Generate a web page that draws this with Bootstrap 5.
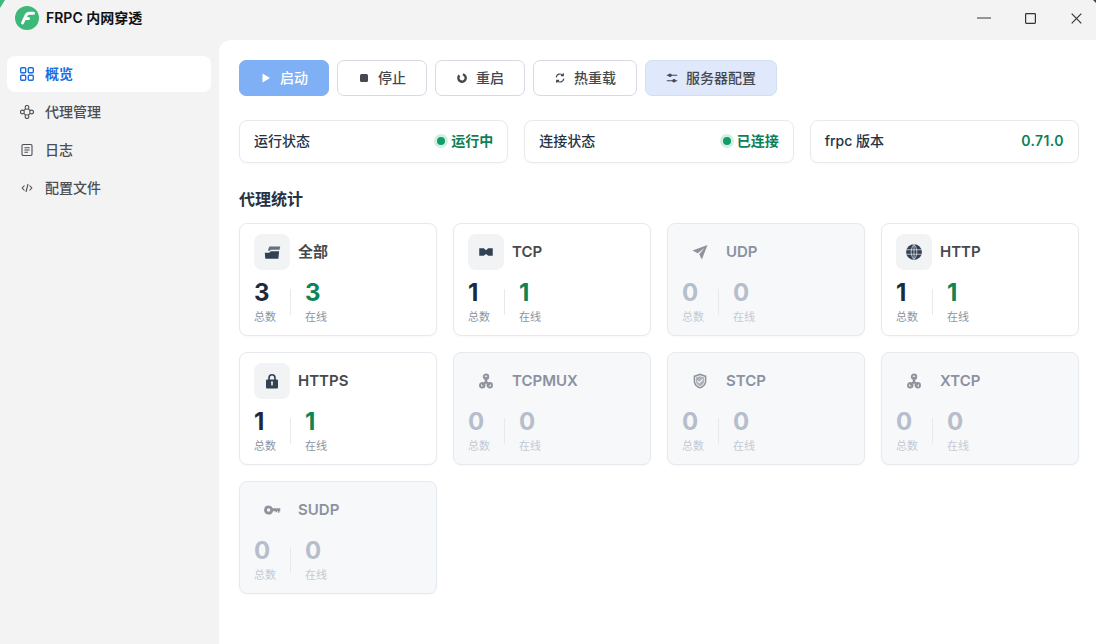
<!DOCTYPE html>
<html lang="zh-CN">
<head>
  <meta charset="UTF-8">
  <title>FRPC 内网穿透</title>
  <link href="https://cdn.jsdelivr.net/npm/bootstrap@5.3.0/dist/css/bootstrap.min.css" rel="stylesheet">
  <style>
    html, body { height: 100%; overflow: hidden; }
    body { background: #f3f3f3; font-family: Inter, "Noto Sans CJK SC", sans-serif; color: #1e293b; font-size: 14px; }
    .corner-mark { position: absolute; top: 0; }
    .app-titlebar { height: 40px; padding: 0 0 4px 15px; }
    .app-logo { width: 24px; height: 24px; }
    .app-title { font-size: 14px; font-weight: 600; color: #111; margin: 0 0 2px 7px; }
    .win-group { margin-right: -3px; }
    .win-btn { width: 46px; height: 36px; }
    .app-body { height: 604px; }
    .app-side { width: 219px; padding: 16px 8px 0 7px; gap: 2px; }
    .side-item { height: 36px; padding-left: 13px; gap: 11px; border-radius: 8px; color: #4b4f55; font-weight: 500; text-decoration: none; }
    .side-item.is-active { background: #fff; color: #1a6fe0; font-weight: 600; }
    .side-item svg { width: 14px; height: 14px; }
    .side-item span, .tool-btn span, .status-box > span { margin-bottom: 2px; }
    .app-main { background: #fff; border-top-left-radius: 12px; padding: 20px 17px 0 20px; }
    .tool-btn { height: 36px; padding: 0 15px; gap: 8px; border: 1px solid #d6dae2; border-radius: 7px; background: #fff; color: #45484e; font-size: 14px; font-weight: 500; }
    .tool-btn svg { width: 12px; height: 12px; }
    .tool-start { width: 90px; background: #7fb0f5; border-color: #7fb0f5; color: #fff; }
    .tool-mid { width: 90px; }
    .tool-reload { width: 104px; }
    .tool-config { width: 132px; background: #dfe9fb; border-color: #d3deee; }
    .status-row { margin-top: 24px; gap: 16px; }
    .status-box { flex: 1 1 0; height: 43px; padding: 0 14px; border: 1px solid #e6e9ee; border-radius: 8px; font-weight: 500; color: #263244; box-shadow: 0 1px 2px rgba(15, 23, 42, .03); }
    .status-ok { color: #0b7f5a; font-weight: 600; gap: 4px; }
    .status-version { letter-spacing: .4px; }
    .status-dot { width: 8px; height: 8px; border-radius: 50%; background: #0f9d68; box-shadow: 0 0 0 3px #d5eee3; margin: 0 2px; }
    .section-title { font-size: 16px; font-weight: 600; color: #263244; margin: 24px 0 12px; line-height: 24px; }
    .proxy-grid { display: grid; grid-template-columns: repeat(4, 198px); gap: 16px; }
    .proxy-card { height: 113px; padding: 10px 14px; border: 1px solid #e6e9ee; border-radius: 8px; background: #fff; box-shadow: 0 1px 2px rgba(15, 23, 42, .03); }
    .proxy-icon { width: 36px; height: 36px; border-radius: 8px; background: #f1f3f5; }
    .proxy-icon svg { width: 18px; height: 18px; fill: #334155; }
    .proxy-name { font-size: 15px; font-weight: 600; color: #46494e; margin-left: 8px; }
    .proxy-stats { margin-top: 8px; }
    .stat-num { font-size: 24px; font-weight: 700; line-height: 30px; color: #1e293b; }
    .stat-online { color: #0b8457; }
    .stat-label { font-size: 11px; line-height: 16px; margin-top: 1px; color: #8d94a0; }
    .stat-sep { width: 1px; height: 26px; background: #e6e9ee; margin: 11px 14px 0 14px; }
    .proxy-card.is-empty { background: #f6f8fa; }
    .is-empty .proxy-icon { background: transparent; }
    .is-empty .proxy-icon svg { fill: #8f949c; }
    .is-empty .proxy-name { color: #8b91a0; }
    .is-empty .stat-num { color: #b6becb; }
    .is-empty .stat-label { color: #c5cad2; }
  </style>
</head>
<body>
  <svg class="corner-mark start-0" width="5" height="8" viewBox="0 0 5 8"><path d="M0 0H5L0 8Z" fill="#3cb878"/></svg>
  <svg class="corner-mark end-0" width="3" height="3" viewBox="0 0 3 3"><path d="M0 0H3V3Z" fill="#444"/></svg>

  <div class="app-titlebar d-flex align-items-center">
    <svg class="app-logo" viewBox="0 0 24 24"><circle cx="12" cy="12" r="12" fill="#3cb878"/><path d="M7.500 17 10.800 9.800Q12 7.300 14.500 7.300H18.500M10 12.500H13.500" fill="none" stroke="#fff" stroke-width="3" stroke-linecap="round"/></svg>
    <span class="app-title">FRPC 内网穿透</span>
    <div class="win-group ms-auto d-flex">
      <div class="win-btn d-flex align-items-center justify-content-center"><svg width="14" height="14" viewBox="0 0 14 14"><path d="M0 7H14" stroke="#555" stroke-width="1.200"/></svg></div>
      <div class="win-btn d-flex align-items-center justify-content-center"><svg width="11" height="11" viewBox="0 0 11 11"><rect x=".6" y=".6" width="9.800" height="9.800" rx=".8" fill="none" stroke="#333" stroke-width="1.200"/></svg></div>
      <div class="win-btn d-flex align-items-center justify-content-center"><svg width="11" height="11" viewBox="0 0 11 11"><path d="M.7 .7 10.300 10.300M10.300 .7 .7 10.300" stroke="#333" stroke-width="1.200"/></svg></div>
    </div>
  </div>

  <div class="app-body d-flex">
    <nav class="app-side d-flex flex-column flex-shrink-0">
      <a class="side-item is-active d-flex align-items-center" href="#"><svg viewBox="0 0 14 14" fill="none" stroke="currentColor" stroke-width="1.400"><rect x=".7" y=".7" width="5" height="5" rx="1"/><rect x="8.300" y=".7" width="5" height="5" rx="1"/><rect x=".7" y="8.300" width="5" height="5" rx="1"/><rect x="8.300" y="8.300" width="5" height="5" rx="1"/></svg><span>概览</span></a>
      <a class="side-item d-flex align-items-center" href="#"><svg viewBox="0 0 14 14" fill="none" stroke="currentColor" stroke-width="1.100"><circle cx="7" cy="2.400" r="1.900"/><circle cx="7" cy="11.600" r="1.900"/><circle cx="2.400" cy="7" r="1.900"/><circle cx="11.600" cy="7" r="1.900"/><path d="M3.800 5.600 5.600 3.800M8.400 3.800 10.200 5.600M10.200 8.400 8.400 10.200M5.600 10.200 3.800 8.400"/></svg><span>代理管理</span></a>
      <a class="side-item d-flex align-items-center" href="#"><svg viewBox="0 0 14 14" fill="none" stroke="currentColor" stroke-width="1.100"><rect x="2" y="1.500" width="10" height="11" rx="1.200"/><path d="M4.400 4.800H9.600M4.400 7H9.600M4.400 9.200H8"/></svg><span>日志</span></a>
      <a class="side-item d-flex align-items-center" href="#"><svg viewBox="0 0 14 14" fill="none" stroke="currentColor" stroke-width="1.100"><path d="M4.500 4.500 2.200 7 4.500 9.500M9.500 4.500 11.800 7 9.500 9.500M8 3 6 11"/></svg><span>配置文件</span></a>
    </nav>

    <main class="app-main flex-grow-1">
      <div class="d-flex gap-2">
        <button type="button" class="tool-btn tool-start d-flex align-items-center justify-content-center"><svg viewBox="0 0 12 12"><path d="M2.500 1.500 10 6 2.500 10.500Z" fill="#fff"/></svg><span>启动</span></button>
        <button type="button" class="tool-btn tool-mid d-flex align-items-center justify-content-center"><svg viewBox="0 0 12 12"><rect x="2" y="2" width="8" height="8" rx="1.500" fill="#45484e"/></svg><span>停止</span></button>
        <button type="button" class="tool-btn tool-mid d-flex align-items-center justify-content-center"><svg viewBox="0 0 12 12"><path d="M7 2.400A3.700 3.700 0 1 1 3.400 3.400" fill="none" stroke="#45484e" stroke-width="2.400"/></svg><span>重启</span></button>
        <button type="button" class="tool-btn tool-reload d-flex align-items-center justify-content-center"><svg viewBox="0 0 12 12" fill="none" stroke="#45484e" stroke-width="1.200"><path d="M2.200 5.400A3.800 3.800 0 0 1 8.900 3.400M9.800 6.600A3.800 3.800 0 0 1 3.100 8.600M9.300 1.200V3.700H6.900M2.700 10.800V8.300H5.100"/></svg><span>热重载</span></button>
        <button type="button" class="tool-btn tool-config d-flex align-items-center justify-content-center"><svg viewBox="0 0 12 12" fill="#45484e" stroke="#45484e" stroke-width="1.100"><path d="M.8 3.200H11.200M.8 8.800H11.200"/><circle cx="4" cy="3.200" r="1.200"/><circle cx="8" cy="8.800" r="1.200"/></svg><span>服务器配置</span></button>
      </div>

      <div class="status-row d-flex">
        <div class="status-box d-flex align-items-center justify-content-between"><span>运行状态</span><span class="status-ok d-flex align-items-center"><i class="status-dot"></i>运行中</span></div>
        <div class="status-box d-flex align-items-center justify-content-between"><span>连接状态</span><span class="status-ok d-flex align-items-center"><i class="status-dot"></i>已连接</span></div>
        <div class="status-box d-flex align-items-center justify-content-between"><span>frpc 版本</span><span class="status-ok status-version">0.71.0</span></div>
      </div>

      <div class="section-title">代理统计</div>

      <div class="proxy-grid">
        <div class="proxy-card">
          <div class="d-flex align-items-center"><div class="proxy-icon d-flex align-items-center justify-content-center"><svg viewBox="0 0 24 24"><path d="M6.500 9.500 8.500 4.500H23L22 9H10.500L8.500 10.500Z" opacity=".75"/><path d="M2.500 13H8L10.500 11H21.500L20.500 21H4Q3 21 2.900 20Z"/></svg></div><span class="proxy-name">全部</span></div>
          <div class="proxy-stats d-flex"><div><div class="stat-num">3</div><div class="stat-label">总数</div></div><div class="stat-sep"></div><div><div class="stat-num stat-online">3</div><div class="stat-label">在线</div></div></div>
        </div>
        <div class="proxy-card">
          <div class="d-flex align-items-center"><div class="proxy-icon d-flex align-items-center justify-content-center"><svg viewBox="0 0 24 24"><path d="M3 7H9L12 9.500 15 7H21V17H15L12 14.500 9 17H3Z"/></svg></div><span class="proxy-name">TCP</span></div>
          <div class="proxy-stats d-flex"><div><div class="stat-num">1</div><div class="stat-label">总数</div></div><div class="stat-sep"></div><div><div class="stat-num stat-online">1</div><div class="stat-label">在线</div></div></div>
        </div>
        <div class="proxy-card is-empty">
          <div class="d-flex align-items-center"><div class="proxy-icon d-flex align-items-center justify-content-center"><svg viewBox="0 0 24 24"><path d="M22 2.500 2 10 9 13.500 18 6.500 11 15 14.500 22Z"/></svg></div><span class="proxy-name">UDP</span></div>
          <div class="proxy-stats d-flex"><div><div class="stat-num">0</div><div class="stat-label">总数</div></div><div class="stat-sep"></div><div><div class="stat-num">0</div><div class="stat-label">在线</div></div></div>
        </div>
        <div class="proxy-card">
          <div class="d-flex align-items-center"><div class="proxy-icon d-flex align-items-center justify-content-center"><svg viewBox="0 0 24 24"><circle cx="12" cy="12" r="10.500"/><path d="M2 9H22M2 15H22M12 2V22M12 2C7 7 7 17 12 22M12 2C17 7 17 17 12 22" fill="none" stroke="#f1f3f5" stroke-width=".9"/></svg></div><span class="proxy-name">HTTP</span></div>
          <div class="proxy-stats d-flex"><div><div class="stat-num">1</div><div class="stat-label">总数</div></div><div class="stat-sep"></div><div><div class="stat-num stat-online">1</div><div class="stat-label">在线</div></div></div>
        </div>
        <div class="proxy-card">
          <div class="d-flex align-items-center"><div class="proxy-icon d-flex align-items-center justify-content-center"><svg viewBox="0 0 24 24"><path fill-rule="evenodd" d="M7 10V7.500A5 5 0 0 1 17 7.500V10H18.500A1.500 1.500 0 0 1 20 11.500V20.500A1.500 1.500 0 0 1 18.500 22H5.500A1.500 1.500 0 0 1 4 20.500V11.500A1.500 1.500 0 0 1 5.500 10ZM9.200 10H14.800V7.500A2.800 2.800 0 0 0 9.200 7.500ZM11 15V18H13V15A1.500 1.500 0 1 0 11 15Z"/></svg></div><span class="proxy-name">HTTPS</span></div>
          <div class="proxy-stats d-flex"><div><div class="stat-num">1</div><div class="stat-label">总数</div></div><div class="stat-sep"></div><div><div class="stat-num stat-online">1</div><div class="stat-label">在线</div></div></div>
        </div>
        <div class="proxy-card is-empty">
          <div class="d-flex align-items-center"><div class="proxy-icon d-flex align-items-center justify-content-center"><svg viewBox="0 0 24 24" stroke="#8f949c"><path d="M12 6.300V13L7 17.700M12 13 17 17.700" stroke-width="3.200" style="fill:none"/><circle cx="12" cy="6.300" r="3" stroke-width="2.600" style="fill:none"/><circle cx="7" cy="17.700" r="3" stroke-width="2.600" style="fill:none"/><circle cx="17" cy="17.700" r="3" stroke-width="2.600" style="fill:none"/></svg></div><span class="proxy-name">TCPMUX</span></div>
          <div class="proxy-stats d-flex"><div><div class="stat-num">0</div><div class="stat-label">总数</div></div><div class="stat-sep"></div><div><div class="stat-num">0</div><div class="stat-label">在线</div></div></div>
        </div>
        <div class="proxy-card is-empty">
          <div class="d-flex align-items-center"><div class="proxy-icon d-flex align-items-center justify-content-center"><svg viewBox="0 0 24 24"><path fill-rule="evenodd" d="M12 2 20.500 5V12C20.500 17 17 20.500 12 22 7 20.500 3.500 17 3.500 12V5ZM12 4.200 5.500 6.500V12C5.500 16 8.200 18.700 12 20 15.800 18.700 18.500 16 18.500 12V6.500Z"/><path d="M12 5.500 17.500 7.400V12C17.500 15.300 15.200 17.700 12 18.900 8.800 17.700 6.500 15.300 6.500 12V7.400Z" opacity=".7"/><path d="M8.500 11.500 11.200 14.200 15.800 9.600" fill="none" stroke="#f6f8fa" stroke-width="1.400"/></svg></div><span class="proxy-name">STCP</span></div>
          <div class="proxy-stats d-flex"><div><div class="stat-num">0</div><div class="stat-label">总数</div></div><div class="stat-sep"></div><div><div class="stat-num">0</div><div class="stat-label">在线</div></div></div>
        </div>
        <div class="proxy-card is-empty">
          <div class="d-flex align-items-center"><div class="proxy-icon d-flex align-items-center justify-content-center"><svg viewBox="0 0 24 24" stroke="#8f949c"><path d="M12 6.300V13L7 17.700M12 13 17 17.700" stroke-width="3.200" style="fill:none"/><circle cx="12" cy="6.300" r="3" stroke-width="2.600" style="fill:none"/><circle cx="7" cy="17.700" r="3" stroke-width="2.600" style="fill:none"/><circle cx="17" cy="17.700" r="3" stroke-width="2.600" style="fill:none"/></svg></div><span class="proxy-name">XTCP</span></div>
          <div class="proxy-stats d-flex"><div><div class="stat-num">0</div><div class="stat-label">总数</div></div><div class="stat-sep"></div><div><div class="stat-num">0</div><div class="stat-label">在线</div></div></div>
        </div>
        <div class="proxy-card is-empty">
          <div class="d-flex align-items-center"><div class="proxy-icon d-flex align-items-center justify-content-center"><svg viewBox="0 0 24 24"><path fill-rule="evenodd" d="M7.500 6A6 6 0 0 1 13 9.800H23V13.500H21.800V15.500H20V13.500H18.500V15H16.700V13.500H13.300A6 6 0 1 1 7.500 6ZM7.500 9.800A2.200 2.200 0 1 0 7.500 14.200 2.200 2.200 0 0 0 7.500 9.800Z"/></svg></div><span class="proxy-name">SUDP</span></div>
          <div class="proxy-stats d-flex"><div><div class="stat-num">0</div><div class="stat-label">总数</div></div><div class="stat-sep"></div><div><div class="stat-num">0</div><div class="stat-label">在线</div></div></div>
        </div>
      </div>
    </main>
  </div>

  <script src="https://cdn.jsdelivr.net/npm/bootstrap@5.3.0/dist/js/bootstrap.bundle.min.js"></script>
</body>
</html>
